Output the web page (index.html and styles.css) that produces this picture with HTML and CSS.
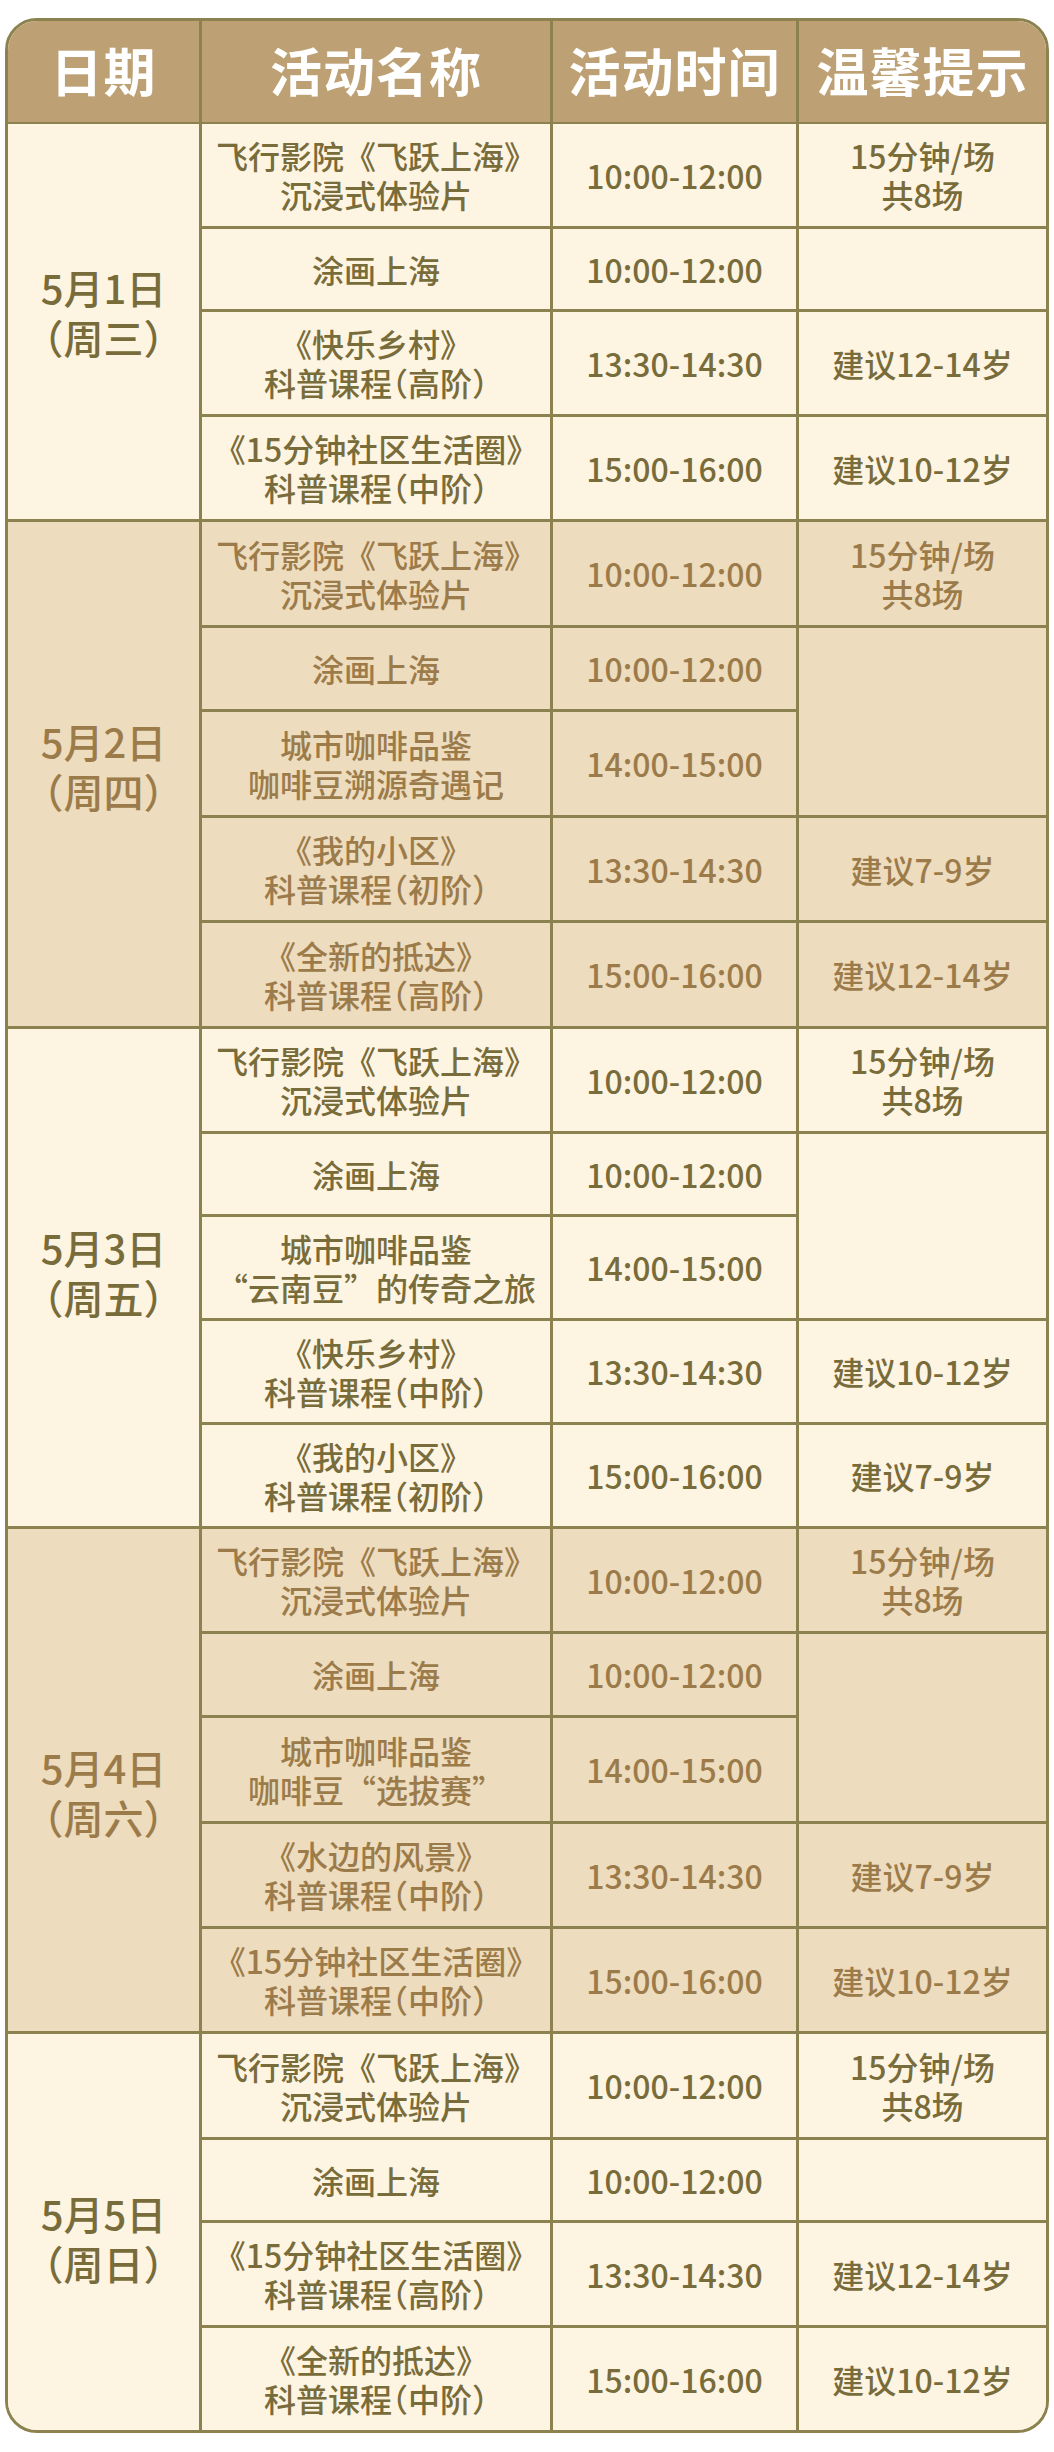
FILE: index.html
```html
<!DOCTYPE html>
<html lang="zh-CN">
<head>
<meta charset="utf-8">
<title>活动安排</title>
<link rel="stylesheet" href="styles.css">
</head>
<body>
<div class="wrap">
  <div class="grid">
    <div class="cell th">日期</div>
    <div class="cell th">活动名称</div>
    <div class="cell th">活动时间</div>
    <div class="cell th last">温馨提示</div>

    <!-- 5月1日 -->
    <div class="cell date a span4 d1"><span>5月1日<br><span class="hw">（</span>周三<span class="hw">）</span></span></div>
    <div class="cell a">飞行影院《飞跃上海》<br>沉浸式体验片</div>
    <div class="cell a">10:00-12:00</div>
    <div class="cell a last">15分钟/场<br>共8场</div>
    <div class="cell a">涂画上海</div>
    <div class="cell a">10:00-12:00</div>
    <div class="cell a last"></div>
    <div class="cell a"><span>《快乐乡村》<br>科普课程<span class="hw">（</span>高阶<span class="hw">）</span></span></div>
    <div class="cell a">13:30-14:30</div>
    <div class="cell a last">建议12-14岁</div>
    <div class="cell a"><span>《15分钟社区生活圈》<br>科普课程<span class="hw">（</span>中阶<span class="hw">）</span></span></div>
    <div class="cell a">15:00-16:00</div>
    <div class="cell a last">建议10-12岁</div>

    <!-- 5月2日 -->
    <div class="cell date b span5 d2"><span>5月2日<br><span class="hw">（</span>周四<span class="hw">）</span></span></div>
    <div class="cell b">飞行影院《飞跃上海》<br>沉浸式体验片</div>
    <div class="cell b">10:00-12:00</div>
    <div class="cell b last">15分钟/场<br>共8场</div>
    <div class="cell b">涂画上海</div>
    <div class="cell b">10:00-12:00</div>
    <div class="cell b last span2"></div>
    <div class="cell b">城市咖啡品鉴<br>咖啡豆溯源奇遇记</div>
    <div class="cell b">14:00-15:00</div>
    <div class="cell b"><span>《我的小区》<br>科普课程<span class="hw">（</span>初阶<span class="hw">）</span></span></div>
    <div class="cell b">13:30-14:30</div>
    <div class="cell b last">建议7-9岁</div>
    <div class="cell b"><span>《全新的抵达》<br>科普课程<span class="hw">（</span>高阶<span class="hw">）</span></span></div>
    <div class="cell b">15:00-16:00</div>
    <div class="cell b last">建议12-14岁</div>

    <!-- 5月3日 -->
    <div class="cell date a span5 d3"><span>5月3日<br><span class="hw">（</span>周五<span class="hw">）</span></span></div>
    <div class="cell a">飞行影院《飞跃上海》<br>沉浸式体验片</div>
    <div class="cell a">10:00-12:00</div>
    <div class="cell a last">15分钟/场<br>共8场</div>
    <div class="cell a">涂画上海</div>
    <div class="cell a">10:00-12:00</div>
    <div class="cell a last span2"></div>
    <div class="cell a">城市咖啡品鉴<br>“云南豆”的传奇之旅</div>
    <div class="cell a">14:00-15:00</div>
    <div class="cell a"><span>《快乐乡村》<br>科普课程<span class="hw">（</span>中阶<span class="hw">）</span></span></div>
    <div class="cell a">13:30-14:30</div>
    <div class="cell a last">建议10-12岁</div>
    <div class="cell a"><span>《我的小区》<br>科普课程<span class="hw">（</span>初阶<span class="hw">）</span></span></div>
    <div class="cell a">15:00-16:00</div>
    <div class="cell a last">建议7-9岁</div>

    <!-- 5月4日 -->
    <div class="cell date b span5 d4"><span>5月4日<br><span class="hw">（</span>周六<span class="hw">）</span></span></div>
    <div class="cell b">飞行影院《飞跃上海》<br>沉浸式体验片</div>
    <div class="cell b">10:00-12:00</div>
    <div class="cell b last">15分钟/场<br>共8场</div>
    <div class="cell b">涂画上海</div>
    <div class="cell b">10:00-12:00</div>
    <div class="cell b last span2"></div>
    <div class="cell b">城市咖啡品鉴<br>咖啡豆“选拔赛”</div>
    <div class="cell b">14:00-15:00</div>
    <div class="cell b"><span>《水边的风景》<br>科普课程<span class="hw">（</span>中阶<span class="hw">）</span></span></div>
    <div class="cell b">13:30-14:30</div>
    <div class="cell b last">建议7-9岁</div>
    <div class="cell b"><span>《15分钟社区生活圈》<br>科普课程<span class="hw">（</span>中阶<span class="hw">）</span></span></div>
    <div class="cell b">15:00-16:00</div>
    <div class="cell b last">建议10-12岁</div>

    <!-- 5月5日 -->
    <div class="cell date a span4 end d5"><span>5月5日<br><span class="hw">（</span>周日<span class="hw">）</span></span></div>
    <div class="cell a">飞行影院《飞跃上海》<br>沉浸式体验片</div>
    <div class="cell a">10:00-12:00</div>
    <div class="cell a last">15分钟/场<br>共8场</div>
    <div class="cell a">涂画上海</div>
    <div class="cell a">10:00-12:00</div>
    <div class="cell a last"></div>
    <div class="cell a"><span>《15分钟社区生活圈》<br>科普课程<span class="hw">（</span>高阶<span class="hw">）</span></span></div>
    <div class="cell a">13:30-14:30</div>
    <div class="cell a last">建议12-14岁</div>
    <div class="cell a end"><span>《全新的抵达》<br>科普课程<span class="hw">（</span>中阶<span class="hw">）</span></span></div>
    <div class="cell a end">15:00-16:00</div>
    <div class="cell a last end">建议10-12岁</div>
  </div>
</div>
</body>
</html>
```
FILE: styles.css
```css
* { box-sizing: border-box; }
html, body {
  margin: 0;
  padding: 0;
  background: #ffffff;
}
body {
  font-family: "Noto Sans CJK SC", "Noto Sans", sans-serif;
}
.wrap {
  margin: 18px 5px 0 5px;
  width: 1044px;
  border: 3px solid #8b8250;
  border-radius: 32px;
  overflow: hidden;
  background: #fef4e2;
}
.grid {
  display: grid;
  grid-template-columns: 194px 351px 246px 247px;
  grid-template-rows:
    103px
    105px 83px 105px 105px
    106px 84px 106px 105px 106px
    105px 83px 104px 104px 104px
    105px 84px 106px 105px 105px
    106px 83px 105px 102px;
}
.cell {
  display: flex;
  align-items: center;
  justify-content: center;
  text-align: center;
  border-right: 3px solid #8b8250;
  border-bottom: 3px solid #8b8250;
  font-size: 32px;
  line-height: 39px;
  font-weight: 500;
}
.cell.last { border-right: none; }
.cell.end { border-bottom: none; }
.hw {
  font-feature-settings: "halt" 1;
}
.th {
  background: #bda175;
  color: #ffffff;
  font-size: 52px;
  font-weight: 700;
  line-height: 60px;
  border-bottom-width: 2px;
  letter-spacing: 1px;
  padding-bottom: 4px;
}
.a {
  background: #fef4e2;
  color: #786c3b;
}
.b {
  background: #eddcbd;
  color: #9c7b4b;
}
.date {
  font-size: 40px;
  line-height: 50px;
}
.d1 { padding-bottom: 20px; }
.d2 { padding-bottom: 16px; }
.d3 { padding-bottom: 12px; }
.d4 { padding-top: 23px; }
.d5 { padding-top: 11px; }
.span4 { grid-row: span 4; }
.span5 { grid-row: span 5; }
.span2 { grid-row: span 2; }
```
